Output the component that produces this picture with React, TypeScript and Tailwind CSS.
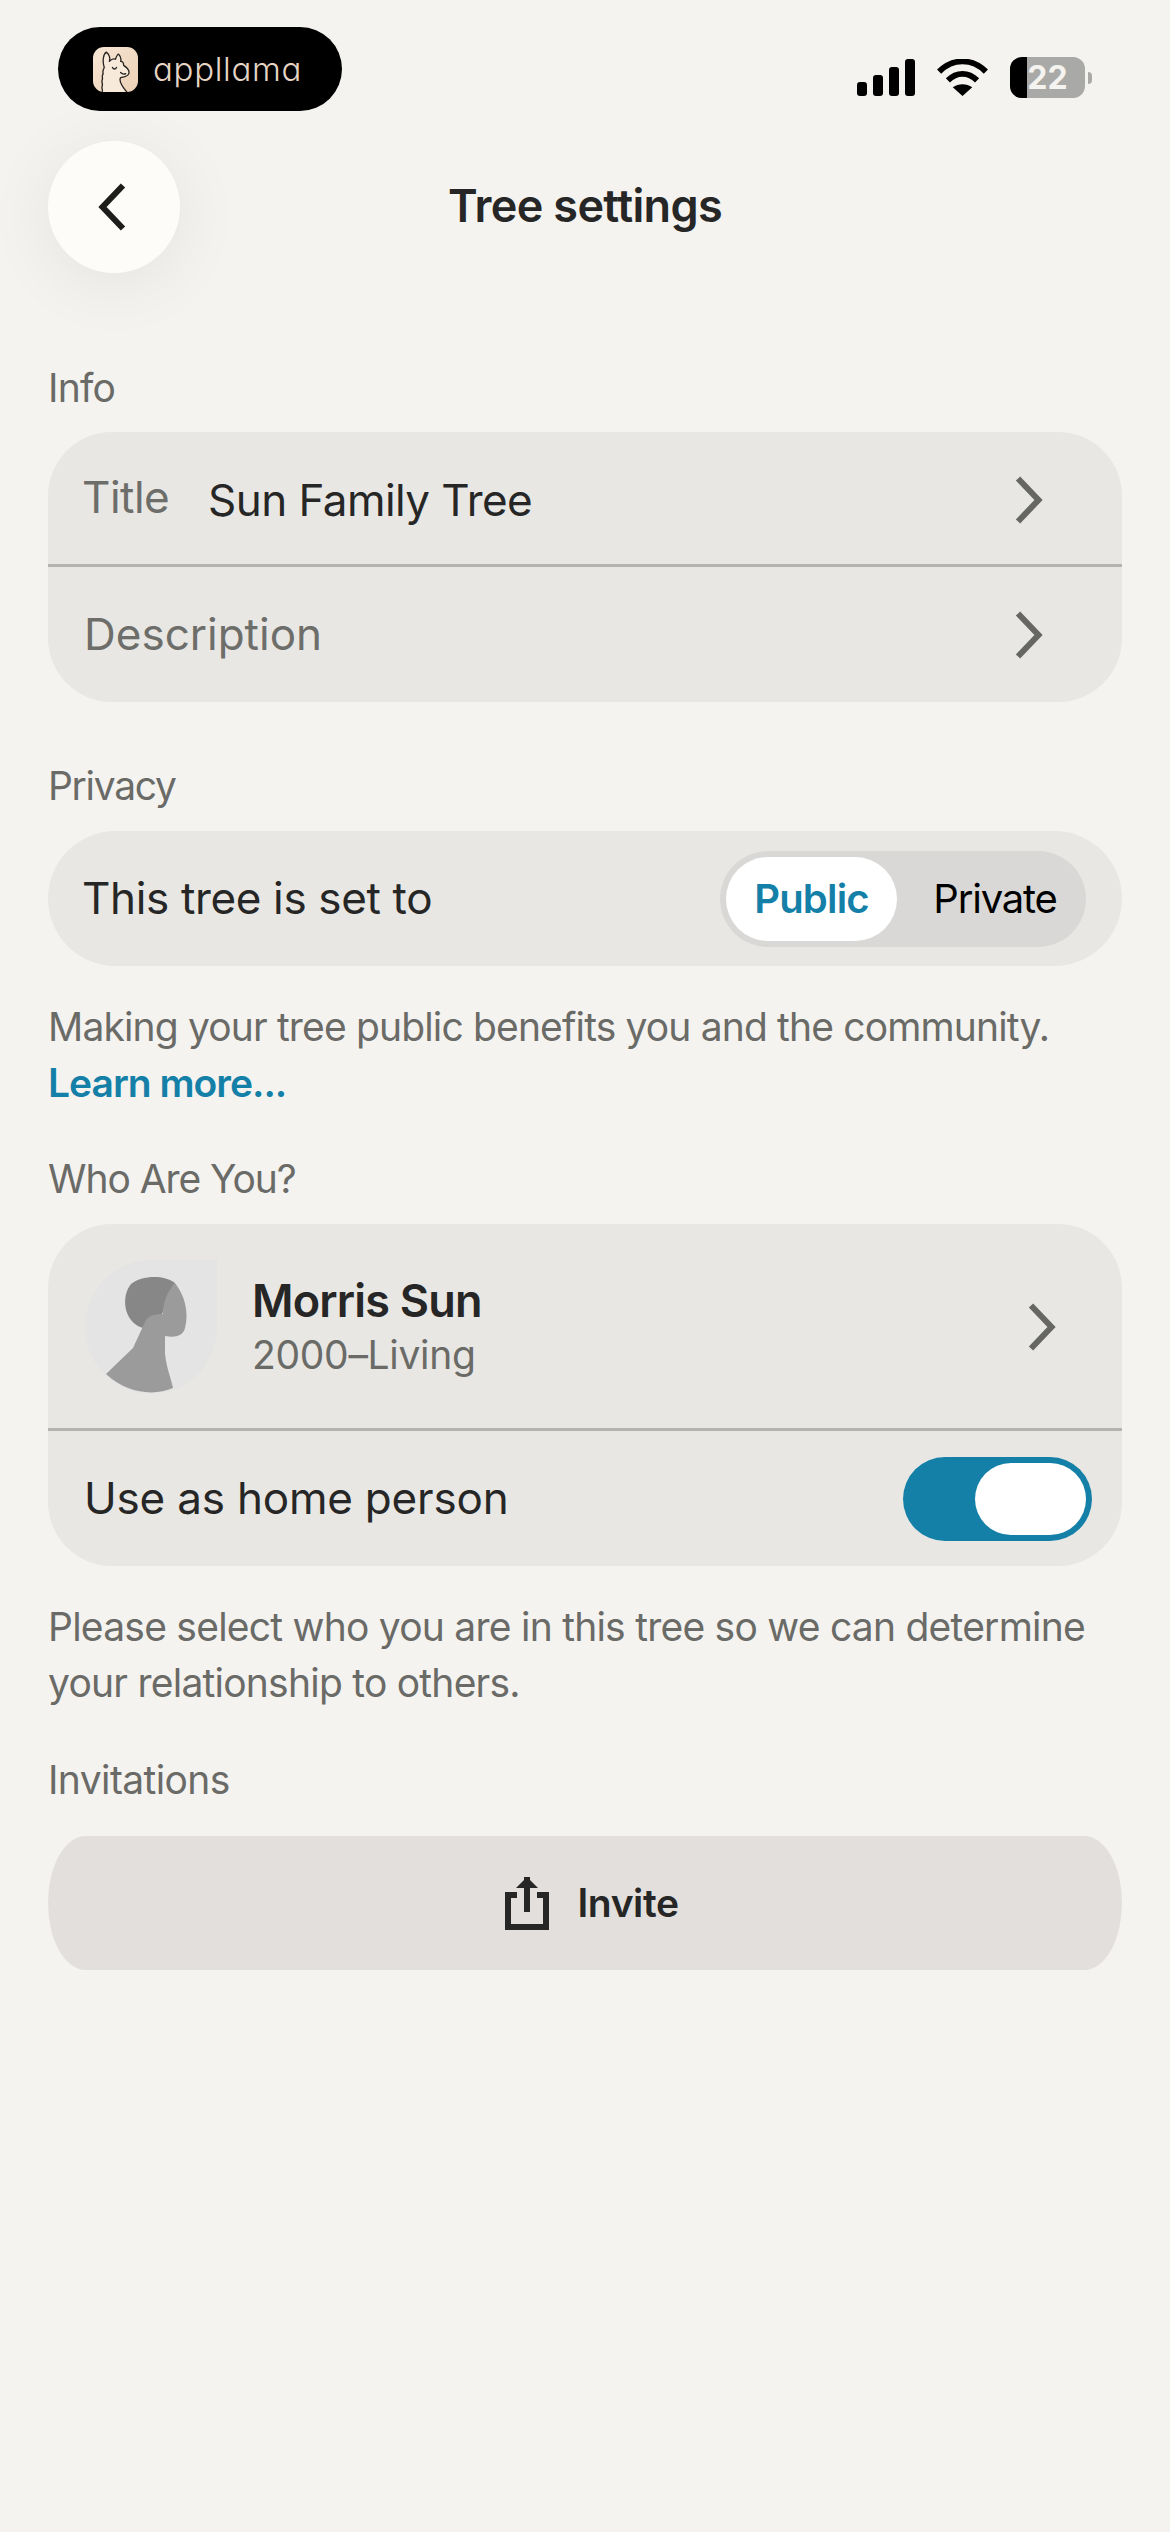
function Chevron() {
  return (
    <svg width="28" height="48" viewBox="0 0 28 48" fill="none" className="shrink-0">
      <path d="M3 2.5 L23.5 24 L3 45.5" stroke="#666663" strokeWidth="6" />
    </svg>
  );
}

function SectionLabel({ children, className }: { children: string; className: string }) {
  return <div className={`h-[56px] pl-[48px] text-[39px] leading-[56px] text-[#6a6a67] ${className}`}>{children}</div>;
}

function Logo() {
  return (
    <div className="flex h-[84px] w-[284px] items-center rounded-full bg-black pl-[35px]">
      <div className="relative h-[45px] w-[45px] overflow-hidden rounded-[11px] bg-gradient-to-br from-[#f7e6d5] to-[#ebd0b5]">
        <svg viewBox="0 0 44 44" className="absolute inset-0" fill="none" stroke="#2a2522" strokeWidth="1.3" strokeLinecap="round" strokeLinejoin="round">
          <path d="M9 44 C10 42 8 41 9 38 C10 36 8 35 9 32 C10 30 8 29 10 26 C9 24 10 22 11 20 C9 14 10 7 13 5 C16 7 17 11 16 14 C18 12 20 11 22 12 C23 9 24 7 25 7 C27 9 28 11 27 14 C29 14 30 16 30 18 C33 20 36 23 35 26 C34 29 30 29 27 30 C25 33 28 38 33 44" fill="#f8eadb" />
          <path d="M19 20 C20 22 22 22 23 20" />
          <path d="M32 26 C30 27 28 26 27 25" />
        </svg>
      </div>
      <span className="ml-[15px] text-[33px] font-light leading-none tracking-[0.7px] text-[#e6d5c4] [font-feature-settings:'cv11']">appllama</span>
    </div>
  );
}

function StatusIcons() {
  return (
    <div className="flex items-center gap-[22px]">
      <svg width="58" height="37" viewBox="0 0 58 37" fill="#000">
        <rect x="0" y="23" width="10" height="14" rx="3" />
        <rect x="16" y="16" width="10" height="21" rx="3" />
        <rect x="32" y="8" width="10" height="29" rx="3" />
        <rect x="48" y="0" width="10" height="37" rx="3" />
      </svg>
      <svg width="51" height="37" viewBox="0 0 52 38" fill="none" stroke="#000" strokeWidth="6">
        <path d="M2 13 C16 -1 36 -1 50 13" />
        <path d="M11 22 C20 13 32 13 41 22" />
        <path d="M26 38 L16 29 C22 25 30 25 36 29 Z" fill="#000" stroke="none" />
      </svg>
      <div className="flex items-center">
        <div className="relative h-[41px] w-[75px] overflow-hidden rounded-[12px] bg-[#a9a9a7]">
          <div className="h-full w-[17px] bg-black" />
          <span className="absolute inset-0 flex items-center justify-center text-[32px] font-bold leading-none text-[#f4f3f0]">22</span>
        </div>
        <div className="ml-[3px] h-[12px] w-[4px] rounded-r-full bg-[#a9a9a7]" />
      </div>
    </div>
  );
}

export default function App() {
  return (
    <div className="min-h-[2532px] w-[1170px] bg-[#f4f3f0] text-[#262626] [font-family:Inter,sans-serif]">
      <div className="flex h-[141px] items-start justify-between pl-[58px] pr-[78px] pt-[27px]">
        <Logo />
        <div className="pt-[30px]">
          <StatusIcons />
        </div>
      </div>

      <div className="relative flex h-[132px] items-center justify-center">
        <button className="absolute left-[48px] top-0 flex h-[132px] w-[132px] items-center justify-center rounded-full bg-[#fdfcf8] pr-[5px] shadow-[0_10px_70px_rgba(0,0,0,0.07)]">
          <svg width="28" height="48" viewBox="0 0 28 48" fill="none">
            <path d="M25 2.5 L4.5 24 L25 45.5" stroke="#1d1d1b" strokeWidth="6" />
          </svg>
        </button>
        <h1 className="pb-[3px] text-[45px] font-semibold leading-none tracking-[-0.65px]">Tree settings</h1>
      </div>

      <div className="mt-[87px]">
        <SectionLabel className="tracking-[-0.8px]">Info</SectionLabel>
      </div>
      <div className="mx-[48px] mt-[16px] overflow-hidden rounded-[64px] bg-[#e8e7e3]">
        <div className="flex h-[132px] items-center pl-[34px] pr-[79px]">
          <span className="w-[126px] pb-[3px] text-[44px] tracking-[-0.5px] text-[#6d6d6a]">Title</span>
          <span className="flex-1 pt-[4px] text-[44px] tracking-[-0.55px]">Sun Family Tree</span>
          <span className="pt-[3px]">
            <Chevron />
          </span>
        </div>
        <div className="h-[3px] bg-[#b4b3b0]" />
        <div className="flex h-[135px] items-center pl-[36px] pr-[79px]">
          <span className="flex-1 pb-[2px] text-[44px] tracking-[0px] text-[#6d6d6a]">Description</span>
          <Chevron />
        </div>
      </div>

      <div className="mt-[56px]">
        <SectionLabel className="tracking-[-1.3px]">Privacy</SectionLabel>
      </div>
      <div className="mx-[48px] mt-[17px] flex h-[135px] items-center justify-between rounded-full bg-[#e8e7e3] pl-[34px] pr-[36px]">
        <span className="pb-[2px] text-[44px] tracking-[-0.35px]">This tree is set to</span>
        <div className="flex h-[96px] w-[366px] items-center rounded-full bg-[#d9d8d6] pl-[6px]">
          <div className="flex h-[84px] w-[171px] items-center justify-center rounded-full bg-white text-[40px] font-semibold tracking-[-0.8px] text-[#1480a8]">Public</div>
          <div className="flex-1 pl-[7px] text-center text-[40px] tracking-[-1.2px] text-black">Private</div>
        </div>
      </div>

      <div className="mt-[33px] px-[48px] text-[39px] leading-[56px] tracking-[-0.85px] text-[#6a6a67]">
        <div>Making your tree public benefits you and the community.</div>
        <div className="font-semibold tracking-[-1px] text-[#1480a8]">Learn more...</div>
      </div>

      <div className="mt-[40px]">
        <SectionLabel className="tracking-[-1.05px]">Who Are You?</SectionLabel>
      </div>
      <div className="mx-[48px] mt-[17px] overflow-hidden rounded-[64px] bg-[#e8e7e3]">
        <div className="flex h-[204px] items-center pl-[37px] pr-[66px]">
          <svg width="132" height="134" viewBox="0 0 132 134" className="mt-[2px] shrink-0">
            <path d="M132 0 L132 66 A66 67 0 1 1 66 0 Z" fill="#e4e4e4" />
            <path d="M46 24 C56 16 78 14 90 23 C82 34 80 46 78 52 L66 74 L58 68 C38 62 36 36 46 24 Z" fill="#878787" />
            <path d="M90 23 C100 36 104 52 100 68 C98 76 90 78 80 76 L80 94 C82 110 86 118 88 128 C70 136 42 134 21 114 L48 88 L60 62 C62 56 70 54 78 54 C78 42 82 32 90 23 Z" fill="#9b9b9b" />
          </svg>
          <div className="ml-[35px] flex-1 pt-[3px]">
            <div className="text-[45px] font-semibold leading-[54px] tracking-[-0.8px]">Morris Sun</div>
            <div className="text-[39px] leading-[54px] tracking-[-0.3px] text-[#6a6a67]">2000–Living</div>
          </div>
          <span className="pt-[2px]">
            <Chevron />
          </span>
        </div>
        <div className="h-[3px] bg-[#b4b3b0]" />
        <div className="flex h-[135px] items-center justify-between pl-[36px] pr-[30px]">
          <span className="pb-[2px] text-[44px] tracking-[-0.2px]">Use as home person</span>
          <div className="flex h-[84px] w-[189px] items-center justify-end rounded-full bg-[#1480a8] pr-[6px]">
            <div className="h-[72px] w-[111px] rounded-full bg-white" />
          </div>
        </div>
      </div>

      <div className="mt-[33px] px-[48px] text-[39px] leading-[56px] tracking-[-0.76px] text-[#6a6a67]">
        Please select who you are in this tree so we can determine your relationship to others.
      </div>

      <div className="mt-[41px]">
        <SectionLabel className="tracking-[-0.6px]">Invitations</SectionLabel>
      </div>
      <button className="mx-[48px] mt-[28px] flex h-[134px] w-[1074px] items-center justify-center gap-[28px] rounded-[38px/67px] bg-[#e2dfdc] pl-[14px]">
        <svg width="44" height="56" viewBox="0 0 44 56" fill="none" stroke="#262626" strokeWidth="6">
          <path d="M12 20 L3 20 L3 52 L41 52 L41 20 L32 20" />
          <path d="M22 2 L22 37" />
          <path d="M22 2 L11 13 L33 13 Z" fill="#262626" stroke="none" />
        </svg>
        <span className="text-[39px] font-semibold tracking-[-0.4px]">Invite</span>
      </button>
    </div>
  );
}
